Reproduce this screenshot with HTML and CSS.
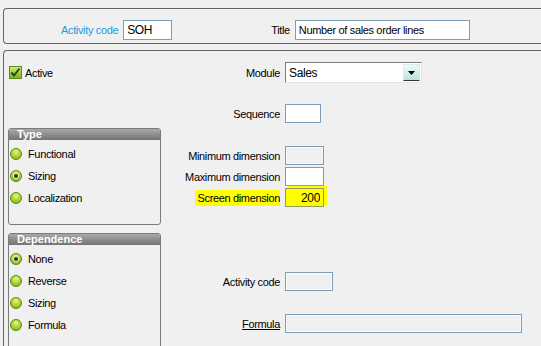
FILE: index.html
```html
<!DOCTYPE html>
<html lang="en">

<head>
    <meta charset="UTF-8">
    <title>Activity code</title>
    <link rel="stylesheet" href="styles.css">
</head>

<body>
    <div class="panel head-panel">
        <label class="lbl-blue">Activity code</label>
        <input class="field code-field" type="text" value="SOH">
        <label class="title-lbl">Title</label>
        <input class="field title-field" type="text" value="Number of sales order lines">
    </div>

    <div class="panel main-panel">
        <div class="left-col">
            <div class="check-row">
                <svg class="check" width="13" height="13" viewBox="0 0 13 13">
                    <defs>
                        <linearGradient id="cg" x1="0" y1="0" x2="0" y2="1">
                            <stop offset="0" stop-color="#d4ec7a" />
                            <stop offset="1" stop-color="#7fae1c" />
                        </linearGradient>
                    </defs>
                    <rect x="0.5" y="0.5" width="12" height="12" fill="url(#cg)" stroke="#5d8a18" />
                    <path d="M2.5 6.5 L5 9.5 L10.5 2.5" fill="none" stroke="#1f4a10" stroke-width="2" />
                </svg>
                <span>Active</span>
            </div>

            <div class="group type-group">
                <div class="group-head">Type</div>
                <div class="radio"><span class="dot"></span>Functional</div>
                <div class="radio"><span class="dot on"></span>Sizing</div>
                <div class="radio"><span class="dot"></span>Localization</div>
            </div>

            <div class="group dep-group">
                <div class="group-head">Dependence</div>
                <div class="radio"><span class="dot on"></span>None</div>
                <div class="radio"><span class="dot"></span>Reverse</div>
                <div class="radio"><span class="dot"></span>Sizing</div>
                <div class="radio"><span class="dot"></span>Formula</div>
            </div>
        </div>

        <div class="right-col">
            <div class="row row-module">
                <label>Module</label>
                <div class="select">
                    <span>Sales</span>
                    <span class="drop">
                        <svg width="7" height="4" viewBox="0 0 7 4"><path d="M0 0 H7 L3.5 4 Z" fill="#000" /></svg>
                    </span>
                </div>
            </div>
            <div class="row row-seq">
                <label>Sequence</label>
                <input class="field w36" type="text">
            </div>
            <div class="row row-min">
                <label>Minimum dimension</label>
                <input class="field off w39" type="text" disabled>
            </div>
            <div class="row row-tight">
                <label>Maximum dimension</label>
                <input class="field w39" type="text">
            </div>
            <div class="row row-tight">
                <label><span class="mark">Screen dimension</span></label>
                <input class="field w39 marked" type="text" value="200">
            </div>
            <div class="row row-act">
                <label>Activity code</label>
                <input class="field off w48" type="text" disabled>
            </div>
            <div class="row row-formula">
                <label class="link">Formula</label>
                <input class="field off w237" type="text" disabled>
            </div>
        </div>
    </div>
</body>

</html>
```

FILE: styles.css
```css
body {
    margin: 0;
    background-color: #f0f0f0;
    font-family: "Liberation Sans", Arial, sans-serif;
    font-size: 11px;
    letter-spacing: -0.35px;
    color: #000;
    height: 346px;
    overflow: hidden;
}

.panel {
    border: 1px solid #666;
    border-right: none;
    border-radius: 4px 0 0 4px;
    margin-left: 3px;
}

.head-panel {
    margin-top: 8px;
    display: flex;
    align-items: flex-start;
    padding-left: 57px;
    padding-top: 11px;
    box-sizing: border-box;
    height: 36px;
}

.head-panel label {
    line-height: 20px;
    margin-right: 5px;
}

.lbl-blue {
    color: #1c9ce0;
}

.title-lbl {
    margin-left: 99px;
}

.field {
    box-sizing: border-box;
    height: 19px;
    border: 1px solid #7f9db9;
    background-color: #fff;
    font-family: "Liberation Sans", Arial, sans-serif;
    font-size: 11px;
    letter-spacing: -0.35px;
    padding: 0 3px;
    margin: 0;
    color: #000;
    outline: none;
}

.code-field {
    width: 49px;
    height: 20px;
    font-size: 12px;
}

.title-field {
    width: 175px;
    height: 20px;
}

.main-panel {
    margin-top: 6px;
    height: 295px;
    overflow: hidden;
    display: flex;
    padding-left: 4px;
    border-bottom: none;
    border-radius: 4px 0 0 0;
}

.left-col {
    width: 153px;
    padding-top: 15px;
}

.check-row {
    display: flex;
    align-items: center;
    height: 13px;
    margin-left: 1px;
}

.check {
    margin-right: 3px;
}

.group {
    border: 1px solid #7b7b7b;
    border-radius: 3px;
    box-sizing: border-box;
    overflow: hidden;
}

.type-group {
    margin-top: 49px;
    height: 97px;
}

.dep-group {
    margin-top: 8px;
    height: 130px;
}

.group-head {
    height: 11px;
    line-height: 11px;
    background: linear-gradient(#a9a9a9, #737373);
    color: #fff;
    font-weight: bold;
    letter-spacing: 0;
    padding-left: 8px;
    margin-bottom: 3px;
}

.radio {
    display: flex;
    align-items: center;
    height: 22px;
    padding-left: 1px;
}

.dot {
    width: 12px;
    height: 12px;
    box-sizing: border-box;
    border-radius: 50%;
    border: 1px solid #5a8a0e;
    background: radial-gradient(circle at 50% 30%, #e6f48a 0, #b4d63a 45%, #74a40c 100%);
    margin-right: 6px;
    position: relative;
}

.dot.on::after {
    content: "";
    position: absolute;
    left: 2px;
    top: 2px;
    width: 6px;
    height: 6px;
    box-sizing: border-box;
    border-radius: 50%;
    background: #173c12;
    border: 1px solid #f4f8e0;
}

.right-col {
    padding-top: 11px;
}

.row {
    display: flex;
    align-items: center;
}

.row label {
    width: 119px;
    text-align: right;
    margin-right: 5px;
}

.row-module {
    height: 21px;
}

.row-seq {
    margin-top: 21px;
}

.row-min {
    margin-top: 23px;
}

.row-tight {
    margin-top: 2px;
}

.row-act {
    margin-top: 65px;
}

.row-formula {
    margin-top: 23px;
}

.select {
    box-sizing: border-box;
    width: 137px;
    height: 21px;
    background: #fff;
    border: 1px solid;
    border-color: #7a7a7a #e4e4e4 #e4e4e4 #7a7a7a;
    display: flex;
    align-items: center;
    justify-content: space-between;
    padding-left: 3px;
    padding-right: 1px;
    font-size: 12px;
}

.drop {
    width: 17px;
    height: 17px;
    box-sizing: border-box;
    background: linear-gradient(#eefafa, #b9e3de);
    border: 1px solid #dfe8e8;
    border-bottom-color: #333;
    display: flex;
    align-items: center;
    justify-content: center;
}

.off {
    background-color: #f0f0f0;
    box-shadow: inset 0 0 0 1px #fafafa;
}

.w36 {
    width: 36px;
}

.w39 {
    width: 39px;
}

.w48 {
    width: 48px;
}

.w237 {
    width: 237px;
}

.mark {
    background-color: #ffff00;
    padding: 2px 0 2px 3px;
}

.marked {
    background-color: #ffff00;
    border-color: #8f9a5c;
    text-align: right;
    font-size: 12px;
    box-shadow: 3px -2px 0 #ffff00;
}

.link {
    text-decoration: underline;
}
```
